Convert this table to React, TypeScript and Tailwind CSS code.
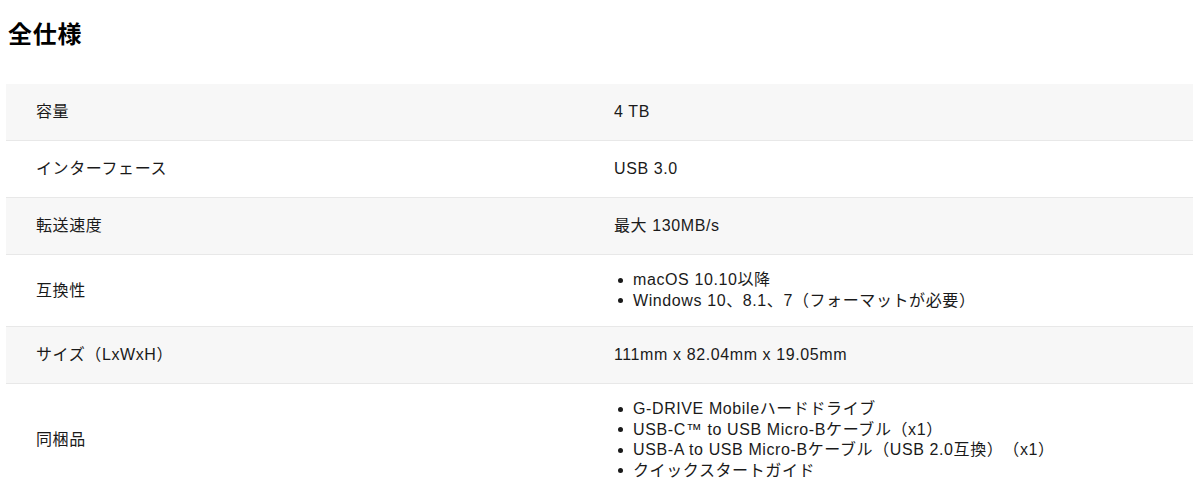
const rows: { label: string; value: string | string[] }[] = [
  { label: "容量", value: "4 TB" },
  { label: "インターフェース", value: "USB 3.0" },
  { label: "転送速度", value: "最大 130MB/s" },
  { label: "互換性", value: ["macOS 10.10以降", "Windows 10、8.1、7（フォーマットが必要）"] },
  { label: "サイズ（LxWxH）", value: "111mm x 82.04mm x 19.05mm" },
  {
    label: "同梱品",
    value: [
      "G-DRIVE Mobileハードドライブ",
      "USB-C™ to USB Micro-Bケーブル（x1）",
      "USB-A to USB Micro-Bケーブル（USB 2.0互換）（x1）",
      "クイックスタートガイド",
    ],
  },
];

export default function App() {
  return (
    <div className="min-h-[495px] bg-white px-[6px] pt-[18px] text-[#1a1a1a] [font-family:'Liberation_Sans','Noto_Sans_CJK_JP',sans-serif] [text-spacing-trim:space-all]">
      <h1 className="pl-[2px] text-[24px] font-bold leading-[34px] tracking-[0.8px] text-black">全仕様</h1>
      <div className="mt-[32px] w-[1187px]">
        {rows.map((row, i) => (
          <div
            key={row.label}
            className={
              "grid grid-cols-[578px_1fr] items-center border-b border-[#e8e8e8] text-[16px] tracking-[0.6px] " +
              (i % 2 === 0 ? "bg-[#f7f7f7]" : "bg-white")
            }
          >
            <div className="py-[17px] pl-[30px] leading-[22px]">{row.label}</div>
            {Array.isArray(row.value) ? (
              <ul className="py-[15px] pl-[30px] leading-[20.5px]">
                {row.value.map((v) => (
                  <li key={v} className="flex items-center">
                    <span className="mr-[10px] ml-[4px] h-[5px] w-[5px] shrink-0 rounded-full bg-[#1a1a1a]" />
                    {v}
                  </li>
                ))}
              </ul>
            ) : (
              <div className="py-[17px] pl-[30px] leading-[22px]">{row.value}</div>
            )}
          </div>
        ))}
      </div>
    </div>
  );
}
